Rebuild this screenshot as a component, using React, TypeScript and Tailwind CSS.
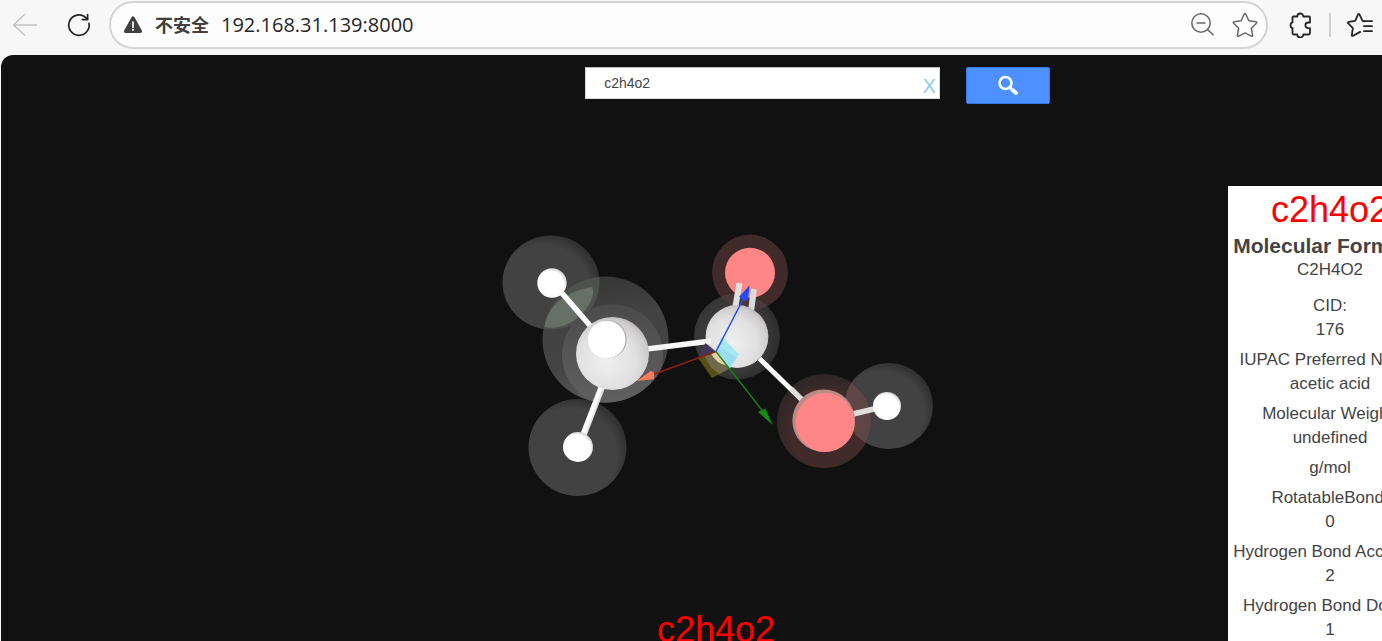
import React, { useState } from 'react';

const properties = [
  { label: 'CID:', values: ['176'] },
  { label: 'IUPAC Preferred Name:', values: ['acetic acid'] },
  { label: 'Molecular Weight:', values: ['undefined', 'g/mol'] },
  { label: 'RotatableBond:', values: ['0'] },
  { label: 'Hydrogen Bond Acceptor:', values: ['2'] },
  { label: 'Hydrogen Bond Donor:', values: ['1'] },
];

const BrowserBar: React.FC = () => (
  <header className="flex h-[55px] shrink-0 items-center bg-[#f7f7f7] pb-1.5 font-['Open_Sans','Noto_Sans_CJK_SC',sans-serif]">
    <button type="button" aria-label="Back" className="ml-3 shrink-0">
      <svg width="26" height="26" viewBox="0 0 26 26" fill="none" stroke="#c2c2c2" strokeWidth="1.5" strokeLinecap="round" strokeLinejoin="round">
        <path d="M12.5 2.5 1.5 13l11 10M1.5 13h23" />
      </svg>
    </button>
    <button type="button" aria-label="Reload" className="ml-7 shrink-0">
      <svg width="26" height="26" viewBox="0 0 26 26" fill="none" stroke="#262626" strokeWidth="1.7" strokeLinecap="round" strokeLinejoin="round">
        <path d="M23 11.3A10.2 10.2 0 1 1 17.5 4l4 3" />
        <path d="M21.6 2.6v5h-5.4" />
      </svg>
    </button>
    <div className="ml-[17px] flex h-12 min-w-0 flex-1 items-center rounded-full border-2 border-[#d4d4d4] bg-[#fdfdfd] pr-2 pl-3">
      <svg width="20" height="18" viewBox="0 0 20 18" className="shrink-0">
        <path d="M8.5 1.2a1.7 1.7 0 0 1 3 0l7.3 13.4a1.5 1.5 0 0 1-1.3 2.3h-15a1.5 1.5 0 0 1-1.3-2.3z" fill="#404040" />
        <path d="M10 6v5.2" stroke="#fdfdfd" strokeWidth="1.7" strokeLinecap="round" />
        <circle cx="10" cy="13.8" r="1.1" fill="#fdfdfd" />
      </svg>
      <span className="ml-3 text-lg font-bold text-[#404040]">不安全</span>
      <input
        type="text"
        aria-label="Address"
        defaultValue="192.168.31.139:8000"
        className="ml-3 min-w-0 flex-1 bg-transparent text-xl text-[#262626] outline-none"
      />
      <button type="button" aria-label="Zoom out" className="shrink-0">
        <svg width="26" height="26" viewBox="0 0 26 26" fill="none" stroke="#686868" strokeWidth="1.5" strokeLinecap="round">
          <circle cx="11" cy="11" r="9.2" />
          <path d="M7 11h8M17.6 17.6l5.6 5.2" />
        </svg>
      </button>
      <button type="button" aria-label="Add to favorites" className="ml-4 shrink-0">
        <svg width="26" height="26" viewBox="0 0 26 26" fill="none" stroke="#686868" strokeWidth="1.5" strokeLinejoin="round">
          <path d="M12.2 2.3q.8-1.4 1.6 0l3.1 6.500 7 1q1.500.4.5 1.500l-5 5 1.200 7q.1 1.500-1.300.9L13 20.900l-6.300 3.300q-1.400.6-1.300-.9l1.200-7-5-5q-1-1.100.5-1.500l7-1z" />
        </svg>
      </button>
    </div>
    <button type="button" aria-label="Extensions" className="ml-5 shrink-0">
      <svg width="24" height="26" viewBox="0 0 24 26" fill="none" stroke="#262626" strokeWidth="1.8" strokeLinejoin="round">
        <path d="M5 4.5h4.3a3 3 0 0 1 6 0H21a1 1 0 0 1 1 1v5h-1.8a2.8 2.8 0 0 0 0 5.6H22V21a1.5 1.5 0 0 1-1.5 1.5h-5.2a3 3 0 0 1-6 0H6A1.5 1.5 0 0 1 4.500 21v-4.900a3 3 0 0 1 0-5.700V5.500a1 1 0 0 1 .5-1z" />
      </svg>
    </button>
    <span className="ml-[17px] h-6 w-0.5 shrink-0 bg-[#d0d0d0]" />
    <button type="button" aria-label="Favorites" className="mr-[9px] ml-4 shrink-0">
      <svg width="26" height="26" viewBox="0 0 26 26" fill="none" stroke="#262626" strokeWidth="1.8" strokeLinecap="round" strokeLinejoin="round">
        <path d="m17.800 9.300-2.300-.4-2.900-6.200q-.8-1.400-1.600 0L8.200 8.900l-6.400 1q-1.400.4-.5 1.500l4.600 4.700-1.100 6.700q-.1 1.500 1.300.9l5.700-3.100 1.400-.7M17 9.200h8M17 14.200h8M17 19.200h8" />
      </svg>
    </button>
  </header>
);

// Ball and stick model of acetic acid with its orientation axes
const Molecule: React.FC = () => (
  <svg viewBox="496 230 440 270" className="mt-[126px] h-[270px] w-[440px] shrink-0" role="img" aria-label="3D model of acetic acid">
    <defs>
      <radialGradient id="halo" cx="0.42" cy="0.58" r="0.6">
        <stop offset="0.8" stopColor="#424242" />
        <stop offset="1" stopColor="#303030" />
      </radialGradient>
      <linearGradient id="frontHalo" x1="0.4" y1="0" x2="0.5" y2="1">
        <stop offset="0" stopColor="#363636" />
        <stop offset="0.3" stopColor="#424242" />
        <stop offset="0.7" stopColor="#444444" />
        <stop offset="1" stopColor="#585858" />
      </linearGradient>
      <linearGradient id="shell" x1="0.5" y1="0" x2="0.5" y2="1">
        <stop offset="0" stopColor="#4c4b4b" />
        <stop offset="0.6" stopColor="#585858" />
        <stop offset="1" stopColor="#606060" />
      </linearGradient>
      <radialGradient id="carbon" cx="0.42" cy="0.6" r="0.66">
        <stop offset="0" stopColor="#efeff0" />
        <stop offset="0.6" stopColor="#e2e1e2" />
        <stop offset="0.85" stopColor="#cfcdce" />
        <stop offset="1" stopColor="#b0aeaf" />
      </radialGradient>
      <radialGradient id="hydrogen" cx="0.45" cy="0.56" r="0.58">
        <stop offset="0.8" stopColor="#ffffff" />
        <stop offset="1" stopColor="#c8c8c8" />
      </radialGradient>
      <radialGradient id="oxygenHalo" cx="0.55" cy="0.6" r="0.64">
        <stop offset="0.65" stopColor="#402a2a" />
        <stop offset="1" stopColor="#292525" />
      </radialGradient>
      <radialGradient id="carbonHalo" cx="0.45" cy="0.5" r="0.55">
        <stop offset="0.75" stopColor="#383838" />
        <stop offset="1" stopColor="#2c2c2c" />
      </radialGradient>
      <clipPath id="frontClip">
        <circle cx="605.5" cy="339.5" r="63" />
      </clipPath>
      <clipPath id="carbonylClip">
        <circle cx="750" cy="272.5" r="38" />
      </clipPath>
      <clipPath id="hydroxylClip">
        <circle cx="824" cy="421" r="47" />
      </clipPath>
    </defs>

    {/* methyl group */}
    <ellipse cx="551" cy="282.5" rx="48.5" ry="47" fill="url(#halo)" />
    <ellipse cx="577.5" cy="447.5" rx="49" ry="48.5" fill="url(#halo)" />
    <circle cx="605.5" cy="339.5" r="63" fill="url(#frontHalo)" />
    <g clipPath="url(#frontClip)">
      <ellipse cx="551" cy="282.5" rx="48.5" ry="47" fill="#4f514f" />
      <path d="M544.5 327C547 308 563 292 592 287 596 293 590 308 577 318 567 327 553 329 544.5 327Z" fill="#667066" />
      <circle cx="612.5" cy="355" r="50.5" fill="url(#shell)" />
    </g>
    <path d="M561 292 593 329" stroke="#fafafa" strokeWidth="5.5" />
    <path d="M603 384 583 436" stroke="#e4e4e4" strokeWidth="6.5" />
    <path d="M601 387 582 437" stroke="#ffffff" strokeWidth="4" />
    <circle cx="552" cy="283" r="14.7" fill="url(#hydrogen)" />
    <circle cx="578" cy="447" r="15" fill="url(#hydrogen)" />

    {/* carboxyl carbon and its double bonded oxygen */}
    <circle cx="737" cy="336.5" r="43" fill="url(#carbonHalo)" />
    <circle cx="750" cy="272.5" r="38" fill="#402a2a" />
    <g clipPath="url(#carbonylClip)">
      <circle cx="737" cy="336.5" r="43" fill="#483a3a" />
    </g>
    <circle cx="750" cy="272.8" r="25" fill="#ff8686" />
    <path d="M739.5 283 735 309" stroke="#e0e0e0" strokeWidth="6" />
    <path d="M754 289 751 311" stroke="#dadada" strokeWidth="6" />
    <circle cx="737" cy="336.5" r="31.4" fill="url(#carbon)" />
    <path d="M645 349.2 711 341" stroke="#f6f6f6" strokeWidth="5.5" />
    <circle cx="612.5" cy="353.5" r="36.5" fill="url(#carbon)" />
    <circle cx="607.6" cy="339.3" r="19.2" fill="#b4b2b3" />
    <circle cx="606.6" cy="339.6" r="18.8" fill="#ffffff" />

    {/* hydroxyl group */}
    <ellipse cx="888.7" cy="406" rx="44.3" ry="43" fill="url(#halo)" />
    <circle cx="824" cy="421" r="47" fill="url(#oxygenHalo)" />
    <g clipPath="url(#hydroxylClip)">
      <ellipse cx="888.7" cy="406" rx="44.3" ry="43" fill="#5e4546" />
    </g>
    <path d="m759.5 358.5 43 42" stroke="#fafafa" strokeWidth="5" />
    <path d="m791 388.500 13 13" stroke="#e2dede" strokeWidth="5" />
    <path d="m851 414.500 25-6" stroke="#e0dcdc" strokeWidth="5.500" />
    <circle cx="887" cy="406" r="14" fill="url(#hydrogen)" />
    <circle cx="823.7" cy="420.7" r="31.3" fill="#b98b85" />
    <circle cx="825.200" cy="422.500" r="29.500" fill="#ff8686" />

    {/* axes */}
    <path d="m716 351.500-10.500-8.500-7.500 15Z" fill="#43385a" />
    <path d="m698 358 18-6.500 13.500 17-17.500 9.500Z" fill="#584f16" />
    <path d="m704 355.500 12-4 13.500 17-10 5.500-8-6Z" fill="#706a4c" />
    <path d="m711 353.500 5-2 11 14q-11-2-16-12Z" fill="#ead2a8" />
    <path d="M716 351.500 721.500 336.500 739 354 729.500 369Z" fill="#a8e8f5" />
    <path d="m717 351 6-2 14 9-7 9Z" fill="#9bdcf0" />
    <path d="m716 351.500-63 23" stroke="#8e2010" strokeWidth="1.400" />
    <path d="M636.700 381 651 370.700l3.300 2-.5 6.600Z" fill="#f77b5c" />
    <path d="m716 351.500 47 60" stroke="#138713" strokeWidth="1.300" />
    <path d="M772.700 425 765.300 408.500 758 412Z" fill="#128c12" />
    <path d="m716 351.500 27-52" stroke="#234cf5" strokeWidth="1.500" />
    <path d="M749.700 285.300 748 299q-4 4-8.700-2.500Z" fill="#234cf5" />
  </svg>
);

const InfoPanel: React.FC<{ name: string }> = ({ name }) => (
  <aside className="mt-[82px] bg-white text-center text-[17px] leading-6 whitespace-nowrap text-[#444444]">
    <h1 className="text-[36px] leading-[48px] text-[#ff0000]">{name}</h1>
    <h2 className="text-[21px] font-bold leading-6">Molecular Formula:</h2>
    <p>C2H4O2</p>
    <dl className="mt-3 flex flex-col gap-1.5">
      {properties.map((item) => (
        <div key={item.label}>
          <dt>{item.label}</dt>
          {item.values.map((value) => (
            <dd key={value} className="not-first-of-type:mt-1.5">{value}</dd>
          ))}
        </div>
      ))}
    </dl>
  </aside>
);

const App: React.FC = () => {
  const [query, setQuery] = useState('c2h4o2');
  const [compound, setCompound] = useState('c2h4o2');

  const handleSubmit = (e: React.FormEvent) => {
    e.preventDefault();
    if (query.trim()) setCompound(query.trim());
  };

  return (
    <div className="flex h-screen flex-col overflow-hidden bg-[#f7f7f7]">
      <BrowserBar />
      <main className="ml-px min-h-0 flex-1 overflow-hidden rounded-tl-xl bg-[#111111] font-['Liberation_Sans',Arial,sans-serif]">
        <form onSubmit={handleSubmit} className="flex items-start gap-[26px] pt-3 pl-[42.3%]">
          <div className="flex h-8 w-[355px] shrink-0 border border-[#d9d9d9] border-t-[#b9b9b9] bg-white">
            <input
              type="text"
              aria-label="Compound"
              value={query}
              onChange={(e) => setQuery(e.target.value)}
              className="min-w-0 flex-1 pl-[18px] text-sm text-[#444444] outline-none"
            />
            <button type="button" aria-label="Clear" onClick={() => setQuery('')} className="mr-[3px] pt-1.5 font-['DejaVu_Sans',sans-serif] text-xl leading-6 text-[#93cdec]">
              X
            </button>
          </div>
          <button type="submit" aria-label="Search" className="flex h-[37px] w-[84px] shrink-0 items-center justify-center rounded-xs border border-[#3079ed] bg-[#4d90fe]">
            <svg width="22" height="22" viewBox="0 0 22 22" fill="none" stroke="#f4fdff" strokeLinecap="round">
              <circle cx="8.5" cy="8" r="6" strokeWidth="2.6" />
              <path d="m13.500 13 1.500 1.500" strokeWidth="2.5" />
              <path d="m15.500 15 3.500 3" strokeWidth="4" />
            </svg>
          </button>
        </form>
        <div className="-mr-[50px] grid grid-cols-[203px_1fr_204px]">
          <section className="col-start-2 flex flex-col items-center">
            <Molecule />
            <p className="mt-[106px] text-[36px] leading-[48px] text-[#ff0000]">{compound}</p>
          </section>
          <InfoPanel name={compound} />
        </div>
      </main>
    </div>
  );
};

export default App;
